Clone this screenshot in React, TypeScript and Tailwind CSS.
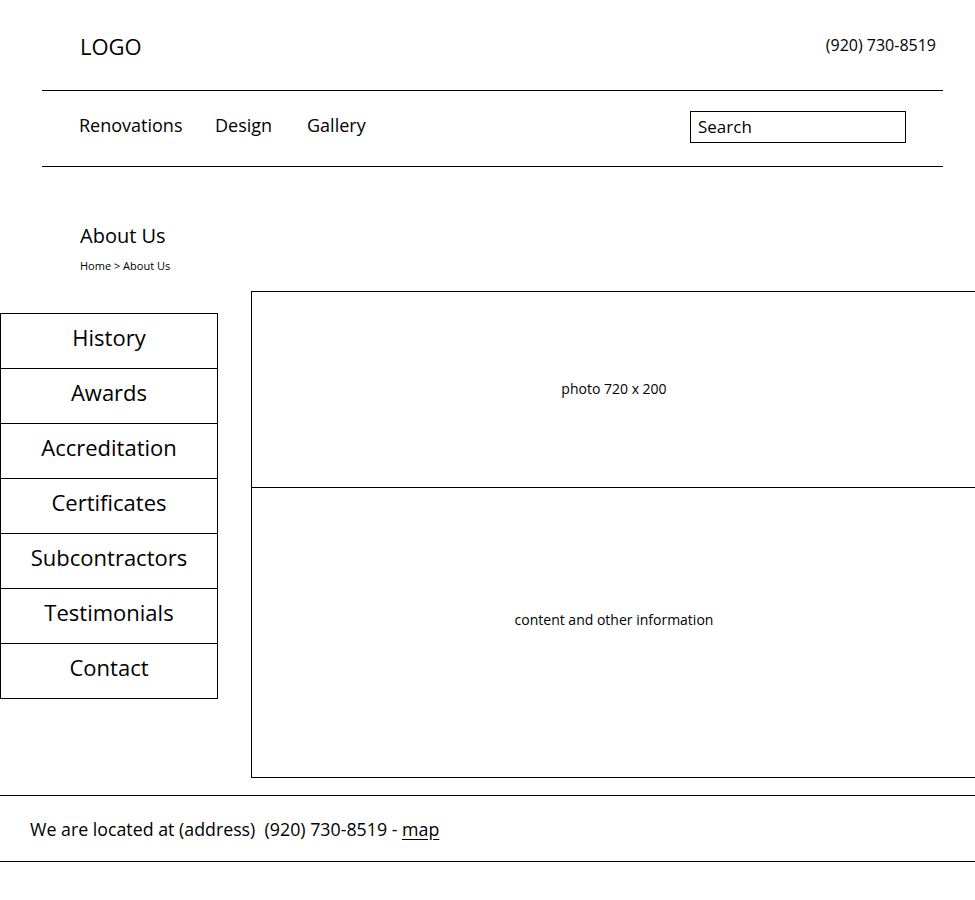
const navLinks = ["Renovations", "Design", "Gallery"];

const sideLinks = [
  "History",
  "Awards",
  "Accreditation",
  "Certificates",
  "Subcontractors",
  "Testimonials",
  "Contact",
];

function Header() {
  return (
    <header className="mx-[42px] w-[901px]">
      <div className="flex h-[90px] items-start justify-between pl-[38px] pr-[7px]">
        <div className="mt-[35px] text-[22px] leading-none">LOGO</div>
        <div className="mt-[37px] text-[16px] leading-none">(920) 730-8519</div>
      </div>
      <nav className="flex h-[77px] items-center justify-between border-y border-black pl-[37px] pr-[37px]">
        <ul className="-mt-[7px] flex items-center text-[18px] leading-none">
          <li className="w-[136px]">{navLinks[0]}</li>
          <li className="w-[92px]">{navLinks[1]}</li>
          <li>{navLinks[2]}</li>
        </ul>
        <div className="-mt-[4px] flex h-[32px] w-[216px] items-center border border-black px-[7px] text-[17px] leading-none">
          Search
        </div>
      </nav>
    </header>
  );
}

function Sidebar() {
  return (
    <ul className="mt-[22px] w-[218px] shrink-0 border-x border-t border-black">
      {sideLinks.map((label) => (
        <li
          key={label}
          className="flex h-[55px] items-center justify-center border-b border-black pb-[8px] text-[22px] leading-none"
        >
          {label}
        </li>
      ))}
    </ul>
  );
}

export default function App() {
  return (
    <div
      className="w-[975px] overflow-hidden bg-white pb-[40px] text-black"
      style={{ fontFamily: '"Open Sans", "Noto Sans", sans-serif' }}
    >
      <Header />

      <section className="pl-[80px] pt-[59px]">
        <h1 className="text-[20px] leading-none">About Us</h1>
        <p className="mt-[14px] text-[11px] leading-none">Home &gt; About Us</p>
      </section>

      <main className="mt-[20px] flex items-start gap-[33px]">
        <Sidebar />
        <div className="w-[726px] shrink-0 border border-black">
          <div className="flex h-[196px] items-center justify-center border-b border-black pb-[2px] text-[14px] leading-none">
            photo 720 x 200
          </div>
          <div className="h-[289px] pt-[125px] text-center text-[14px] leading-none">
            content and other information
          </div>
        </div>
      </main>

      <footer className="mt-[17px] flex h-[67px] items-center border-y border-black pl-[30px] pt-[3px] text-[17.8px] leading-none whitespace-pre">
        We are located at (address)  (920) 730-8519 - <span className="underline underline-offset-[3px]">map</span>
      </footer>
    </div>
  );
}
